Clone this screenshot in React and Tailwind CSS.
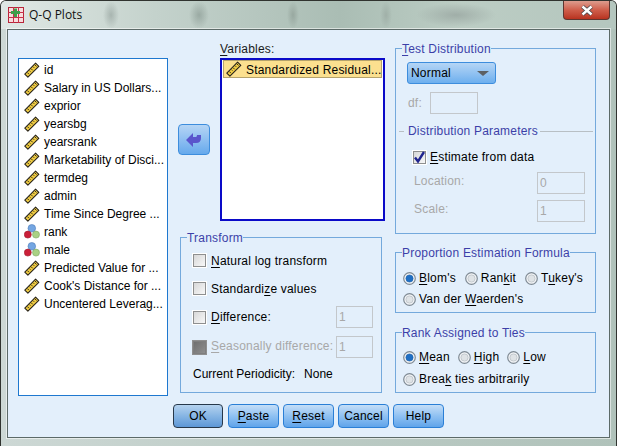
const FONT = "font-['Liberation_Sans',Arial,sans-serif]";

function Ruler() {
  return (
    <svg width="16" height="16" viewBox="0 0 16 16" className="shrink-0">
      <path d="M0.8 12.2 L11.6 1.2 L14.8 4.4 L3.9 15.2 Z" fill="#f0cc42" stroke="#26221a" strokeWidth="1.1" strokeLinejoin="round" />
      <path d="M3.4 10.6l1.5 1.5M5.4 8.6l1 1M7.2 6.8l1.5 1.5M9.2 4.8l1 1M11 3l1.5 1.5" stroke="#26221a" strokeWidth="0.9" />
    </svg>
  );
}

function Nominal() {
  return (
    <svg width="16" height="16" viewBox="0 0 16 16" className="shrink-0">
      <circle cx="7.8" cy="4.3" r="3.8" fill="#74a6e2" stroke="#4f7cb8" strokeWidth="0.6" />
      <circle cx="12" cy="10.6" r="3.5" fill="#a9d184" stroke="#7ea663" strokeWidth="0.6" />
      <circle cx="3.8" cy="10.6" r="3.5" fill="#cb1f38" stroke="#9f1a2c" strokeWidth="0.6" />
    </svg>
  );
}

function Mn({ children }) {
  return <span className="underline decoration-1 underline-offset-2">{children}</span>;
}

function Check({ checked, disabled }) {
  return (
    <span
      className={
        disabled
          ? "w-[13px] h-[13px] shrink-0 border border-[#7f7f7f] outline outline-1 outline-[#8f8f8f] bg-gradient-to-br from-[#707070] to-[#8e8e8e]"
          : "w-[13px] h-[13px] shrink-0 border border-[#8e8f8f] outline outline-1 outline-white bg-gradient-to-br from-[#d8d8d8] to-[#f8f8f8] flex items-center justify-center"
      }
    >
      {checked && (
        <svg width="13" height="13" viewBox="0 0 13 13" className="shrink-0">
          <path d="M2 6.5 L5 10.5 L11 1" fill="none" stroke="#21258f" strokeWidth="2.4" />
        </svg>
      )}
    </span>
  );
}

function Radio({ checked }) {
  return (
    <svg width="13" height="13" viewBox="0 0 13 13" className="shrink-0">
      <circle cx="6.5" cy="6.5" r="5.8" fill="#f2f4f6" stroke="#7f8a94" strokeWidth="1.2" />
      <circle cx="6.5" cy="6.5" r="3.6" fill={checked ? "#1f6fc4" : "#dfe3e6"} stroke={checked ? "#1a5ea8" : "#aeb6bc"} strokeWidth="0.6" />
    </svg>
  );
}

function Option({ children, checked }) {
  return (
    <span className="flex items-center gap-[3px] text-black">
      <Radio checked={checked} />
      <span>{children}</span>
    </span>
  );
}

function Field({ value, className = "" }) {
  return (
    <span className={"h-[22px] border border-[#c3c7cb] text-[#a8a8a8] pl-[2px] flex items-center shrink-0 " + className}>{value}</span>
  );
}

function Btn({ children, main, className = "" }) {
  return (
    <button
      className={
        "h-[24px] rounded-[4px] border bg-gradient-to-b text-black " +
        (main ? "border-[#27384a] from-[#b5d2ee] via-[#86b5e4] to-[#5d97d6] " : "border-[#2a7fd6] from-[#c5def7] via-[#8fc1f2] to-[#5fa4ea] ") +
        className
      }
    >
      {children}
    </button>
  );
}

function Group({ title, className = "", children }) {
  return (
    <fieldset className={"border border-[#74a9dc] " + className}>
      <legend className="ml-[6px] h-[14px] leading-[16px] text-[#3c3fa8]">{title}</legend>
      {children}
    </fieldset>
  );
}

const vars = [
  ["id", Ruler],
  ["Salary in US Dollars...", Ruler],
  ["exprior", Ruler],
  ["yearsbg", Ruler],
  ["yearsrank", Ruler],
  ["Marketability of Disci...", Ruler],
  ["termdeg", Ruler],
  ["admin", Ruler],
  ["Time Since Degree ...", Ruler],
  ["rank", Nominal],
  ["male", Nominal],
  ["Predicted Value for ...", Ruler],
  ["Cook's Distance for ...", Ruler],
  ["Uncentered Leverag...", Ruler],
];

export default function App() {
  return (
    <div className={"w-[617px] h-[446px] overflow-hidden rounded-t-[6px] bg-[#30332f] text-[12px] leading-[14px] tracking-[0.2px] text-[#1a1a1a] " + FONT}>
      <div className="h-[445px] ml-px mr-px mt-px rounded-t-[5px] bg-gradient-to-r from-[#cdd8d5] via-[#bccbc5] to-[#b0c2ba]">
        <div className="h-[28px] flex items-start pl-[7px] pr-[6px] rounded-t-[5px] bg-[radial-gradient(ellipse_8px_14px_at_110px_14px,#a8b5b0,transparent),radial-gradient(ellipse_10px_14px_at_198px_14px,#9aaaa3,transparent),radial-gradient(ellipse_6px_14px_at_292px_14px,#98a8a0,transparent),radial-gradient(ellipse_6px_14px_at_385px_14px,#a0b0a8,transparent),radial-gradient(ellipse_40px_12px_at_455px_14px,#a0aea8,transparent),linear-gradient(to_right,#e0e8e5,#c4d2cc_25%,#aabdb4_55%,#bccdc4_75%,#b4c6be)]">
          <svg width="16" height="16" viewBox="0 0 16 16" className="mt-[6px] shrink-0">
            <rect x="0.5" y="0.5" width="15" height="15" fill="#f8dcdc" stroke="#b8263a" />
            <path d="M0 5.5h16M0 10.5h16M5.5 0v16M10.5 0v16" stroke="#c8324a" />
            <path d="M3 4h3V1.5h3V4h3v3H9v3H6V7H3z" fill="#3e9e4a" />
          </svg>
          <span className="ml-[5px] mt-[5px] tracking-normal text-[#111] font-['Open_Sans',sans-serif] leading-[18px]">Q-Q Plots</span>
          <div className="ml-auto w-[47px] h-[19px] rounded-b-[4px] border border-t-0 border-[#5e3630] bg-gradient-to-b from-[#dc9c8e] via-[#cf5e4b] to-[#b8321f] flex items-center justify-center">
            <svg width="14" height="11" viewBox="0 0 14 11">
              <path d="M2.5 1.5 L11.5 9.5 M11.5 1.5 L2.5 9.5" stroke="#44454a" strokeWidth="4" />
              <path d="M2.5 1.5 L11.5 9.5 M11.5 1.5 L2.5 9.5" stroke="#fff" strokeWidth="2.4" />
            </svg>
          </div>
        </div>

        <div className="ml-[6px] w-[603px] h-[409px] border border-[#5c6a68] bg-[#e3effb] pl-[10px] pt-[18px] shadow-[0_0_0_1px_rgba(255,255,255,0.55)]">
          <div className="flex">
            <div className="w-[150px] h-[338px] mt-[10px] border border-[#1e78cf] bg-white pt-[2px] shrink-0 tracking-normal">
              {vars.map(([name, Icon]) => (
                <div key={name} className="h-[18px] flex items-center gap-[4px] pl-[5px] text-black whitespace-nowrap">
                  <Icon />
                  <span>{name}</span>
                </div>
              ))}
            </div>

            <div className="w-[204px] ml-[10px] shrink-0">
              <div className="flex h-[182px]">
                <button className="w-[32px] h-[31px] mt-[76px] rounded-[4px] border border-[#3d8ddd] bg-gradient-to-b from-[#b5d5f5] to-[#66a9ec] flex items-center justify-center shrink-0">
                  <svg width="16" height="14" viewBox="0 0 16 14">
                    <path d="M0 7 L7 0 V4 H10 Q11 4 11 2 H15 V5 Q15 10 10 10 H7 V14 Z" fill="#5a55cc" />
                  </svg>
                </button>
                <div className="ml-[10px] w-[165px] mt-[-7px] shrink-0">
                  <div className="h-[14px] leading-[16px]"><Mn>V</Mn>ariables:</div>
                  <div className="w-[165px] h-[163px] mt-[3px] border-2 border-[#0a0ac8] bg-white px-[1px]">
                    <div className="h-[18px] flex items-center gap-[4px] pl-[2px] bg-[#fbe08f] border border-[#b5a36c] text-black whitespace-nowrap">
                      <Ruler />
                      <span className="pt-[2px]">Standardized Residual...</span>
                    </div>
                  </div>
                </div>
              </div>

              <Group title="Transform" className="ml-[2px] w-[202px] h-[163px]">
                <div className="pl-[12px] pr-[8px]">
                  <div className="flex items-center gap-[5px] h-[14px] mt-[9px] text-black"><Check /><span className="pt-[2px]"><Mn>N</Mn>atural log transform</span></div>
                  <div className="flex items-center gap-[5px] h-[14px] mt-[14px] text-black"><Check /><span className="pt-[2px]">Standardi<Mn>z</Mn>e values</span></div>
                  <div className="flex items-center h-[22px] mt-[11px] text-black"><Check /><span className="ml-[5px]"><Mn>D</Mn>ifference:</span><Field value="1" className="ml-auto w-[37px]" /></div>
                  <div className="flex items-center h-[22px] mt-[8px] text-[#a8a8a8]"><Check disabled /><span className="ml-[5px] pb-[2px] whitespace-nowrap"><Mn>S</Mn>easonally difference:</span><Field value="1" className="ml-auto w-[37px]" /></div>
                  <div className="flex mt-[9px] text-black tracking-normal"><span>Current Periodicity:</span><span className="ml-[9px]">None</span></div>
                </div>
              </Group>
            </div>

            <div className="w-[201px] ml-[13px] mt-[-7px] shrink-0">
              <Group title={<><Mn>T</Mn>est Distribution</>} className="h-[193px]">
                <div className="ml-[11px] mt-[7px] w-[89px] h-[22px] rounded-[3px] border border-[#3d8ddd] bg-gradient-to-b from-[#b5d5f5] to-[#6dafee] flex items-center justify-between pl-[3px] pr-[6px] text-black">
                  Normal
                  <span className="w-0 h-0 border-l-[6px] border-r-[6px] border-t-[5px] border-l-transparent border-r-transparent border-t-[#5c6064]" />
                </div>
                <div className="flex items-center ml-[12px] mt-[8px] text-[#a8a8a8]">df:<Field className="ml-[8px] w-[48px]" /></div>
                <div className="flex items-center mt-[10px] text-[#3c3fa8]">
                  <span className="ml-[3px] w-[5px] h-px bg-[#b8bfc4]" />
                  <span className="ml-[4px] whitespace-nowrap">Distribution Parameters</span>
                  <span className="ml-[2px] w-[53px] h-px bg-[#b8bfc4]" />
                </div>
                <div className="flex items-center gap-[4px] ml-[17px] mt-[12px] text-black"><Check checked /><span><Mn>E</Mn>stimate from data</span></div>
                <div className="flex items-center ml-[18px] mt-[8px] text-[#a8a8a8]"><span className="pb-[4px]">Location:</span><Field value="0" className="ml-auto mr-[10px] w-[48px]" /></div>
                <div className="flex items-center ml-[18px] mt-[6px] text-[#a8a8a8]"><span className="pb-[4px]">Scale:</span><Field value="1" className="ml-auto mr-[10px] w-[48px]" /></div>
              </Group>
              <Group title="Proportion Estimation Formula" className="h-[68px] mt-[11px]">
                <div className="pl-[7px]">
                  <div className="flex mt-[12px] gap-[9px]">
                    <Option checked><Mn>B</Mn>lom's</Option>
                    <Option>Ran<Mn>k</Mn>it</Option>
                    <Option>T<Mn>u</Mn>key's</Option>
                  </div>
                  <div className="flex mt-[7px]"><Option>Van der <Mn>W</Mn>aerden's</Option></div>
                </div>
              </Group>
              <Group title="Rank Assigned to Ties" className="h-[68px] mt-[12px]">
                <div className="pl-[7px]">
                  <div className="flex mt-[11px] gap-[8px]">
                    <Option checked><Mn>M</Mn>ean</Option>
                    <Option><Mn>H</Mn>igh</Option>
                    <Option><Mn>L</Mn>ow</Option>
                  </div>
                  <div className="flex mt-[8px]"><Option>Brea<Mn>k</Mn> ties arbitrarily</Option></div>
                </div>
              </Group>
            </div>
          </div>

          <div className="flex gap-[4px] ml-[155px] mt-[8px]">
            <Btn main className="w-[50px] mr-px">OK</Btn>
            <Btn className="w-[51px]"><Mn>P</Mn>aste</Btn>
            <Btn className="w-[51px]"><Mn>R</Mn>eset</Btn>
            <Btn className="w-[51px]">Cancel</Btn>
            <Btn className="w-[51px]">Help</Btn>
          </div>
        </div>
      </div>
    </div>
  );
}
